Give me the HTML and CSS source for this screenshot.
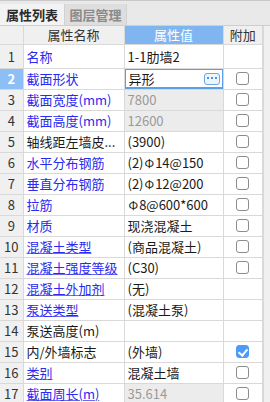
FILE: index.html
```html
<!DOCTYPE html>
<html lang="zh-CN">
  <head>
    <meta charset="UTF-8" />
    <meta name="viewport" content="width=device-width, initial-scale=1.0" />
    <title>属性列表</title>
    <link rel="stylesheet" href="styles.css">
  </head>
  <body>
    <div class="panel">
      <div class="tabs">
        <div class="tab tab-active">属性列表</div>
        <div class="tab">图层管理</div>
      </div>
      <div class="grid-wrap">
        <table class="props">
          <thead>
            <tr>
              <th class="col-num"></th>
              <th class="col-name">属性名称</th>
              <th class="col-value head-active">属性值</th>
              <th class="col-add">附加</th>
            </tr>
          </thead>
          <tbody>
            <tr class="row-first">
              <td class="num">1</td>
              <td class="name">名称</td>
              <td class="value">1-1肋墙2</td>
              <td class="add"></td>
            </tr>
            <tr>
              <td class="num num-active">2</td>
              <td class="name">截面形状</td>
              <td class="value value-edit">
                <div class="edit-box">
                  <span>异形</span>
                  <span class="more-btn">
                    <svg width="10" height="3" viewBox="0 0 10 3">
                      <rect x="0" y="0" width="2" height="2" fill="#4f95e3" />
                      <rect x="4" y="0" width="2" height="2" fill="#4f95e3" />
                      <rect x="8" y="0" width="2" height="2" fill="#4f95e3" />
                    </svg>
                  </span>
                </div>
              </td>
              <td class="add"><span class="check"></span></td>
            </tr>
            <tr>
              <td class="num">3</td>
              <td class="name">截面宽度(mm)</td>
              <td class="value value-ro">7800</td>
              <td class="add"><span class="check"></span></td>
            </tr>
            <tr>
              <td class="num">4</td>
              <td class="name">截面高度(mm)</td>
              <td class="value value-ro">12600</td>
              <td class="add"><span class="check"></span></td>
            </tr>
            <tr>
              <td class="num">5</td>
              <td class="name name-plain">轴线距左墙皮...</td>
              <td class="value">(3900)</td>
              <td class="add"><span class="check"></span></td>
            </tr>
            <tr>
              <td class="num">6</td>
              <td class="name">水平分布钢筋</td>
              <td class="value">(2)<span class="bar">Φ</span>14@150</td>
              <td class="add"><span class="check"></span></td>
            </tr>
            <tr>
              <td class="num">7</td>
              <td class="name">垂直分布钢筋</td>
              <td class="value">(2)<span class="bar">Φ</span>12@200</td>
              <td class="add"><span class="check"></span></td>
            </tr>
            <tr>
              <td class="num">8</td>
              <td class="name">拉筋</td>
              <td class="value"><span class="bar">Φ</span>8@600*600</td>
              <td class="add"><span class="check"></span></td>
            </tr>
            <tr>
              <td class="num">9</td>
              <td class="name">材质</td>
              <td class="value">现浇混凝土</td>
              <td class="add"><span class="check"></span></td>
            </tr>
            <tr>
              <td class="num">10</td>
              <td class="name name-link">混凝土类型</td>
              <td class="value">(商品混凝土)</td>
              <td class="add"><span class="check"></span></td>
            </tr>
            <tr>
              <td class="num">11</td>
              <td class="name name-link">混凝土强度等级</td>
              <td class="value">(C30)</td>
              <td class="add"><span class="check"></span></td>
            </tr>
            <tr>
              <td class="num">12</td>
              <td class="name name-link">混凝土外加剂</td>
              <td class="value">(无)</td>
              <td class="add"></td>
            </tr>
            <tr>
              <td class="num">13</td>
              <td class="name name-link">泵送类型</td>
              <td class="value">(混凝土泵)</td>
              <td class="add"></td>
            </tr>
            <tr>
              <td class="num">14</td>
              <td class="name name-plain">泵送高度(m)</td>
              <td class="value"></td>
              <td class="add"></td>
            </tr>
            <tr>
              <td class="num">15</td>
              <td class="name name-plain">内/外墙标志</td>
              <td class="value">(外墙)</td>
              <td class="add"><span class="check check-on"></span></td>
            </tr>
            <tr>
              <td class="num">16</td>
              <td class="name name-link">类别</td>
              <td class="value">混凝土墙</td>
              <td class="add"><span class="check"></span></td>
            </tr>
            <tr>
              <td class="num">17</td>
              <td class="name name-link">截面周长(m)</td>
              <td class="value value-ro">35.614</td>
              <td class="add"><span class="check"></span></td>
            </tr>
          </tbody>
        </table>
        <div class="scroll-track"></div>
      </div>
    </div>
  </body>
</html>
```

FILE: styles.css
```css
/* Reset */
* {
  box-sizing: border-box;
}

body {
  margin: 0;
  width: 270px;
  height: 402px;
  overflow: hidden;
  background-color: #ffffff;
  font-family: "Noto Sans CJK SC", "Liberation Sans", sans-serif;
  font-size: 13px;
  color: #1a1a1a;
}

/* Tabs */
.tabs {
  display: flex;
  height: 26px;
  padding-top: 3px;
  background-color: #e9e9e9;
  border-top: 1px solid #c9c9c9;
  border-bottom: 1px solid #cfcfcf;
}

.tab {
  width: 62px;
  padding-top: 1px;
  text-align: center;
  color: #8a8a8a;
  font-weight: bold;
  line-height: 20px;
  background-color: #dedede;
  border-right: 1px solid #d2d2d2;
}

.tab-active {
  width: 65px;
  color: #2b2b2b;
  background-color: #f3f3f3;
}

/* Grid */
.grid-wrap {
  display: flex;
}

.props {
  width: 263px;
  border-collapse: collapse;
  table-layout: fixed;
}

.props th,
.props td {
  padding: 0;
  border: 1px solid #d9d9d9;
  white-space: nowrap;
  overflow: hidden;
}

.props th {
  height: 18px;
  font-weight: normal;
  line-height: 16px;
  text-align: center;
  color: #333333;
  background-color: #f0f0f0;
  border-top: none;
}

.props td {
  height: 21px;
  line-height: 19px;
}

.props tr:first-child th:first-child,
.props td:first-child {
  border-left: none;
}

.col-num {
  width: 23px;
}

.col-name {
  width: 101px;
}

.col-value {
  width: 99px;
}

.props .head-active {
  color: #ffffff;
  background-color: #7fb6f2;
}

.row-first td {
  height: 24px;
}

.num {
  text-align: center;
  color: #333333;
  background-color: #f0f0f0;
}

.props .num-active {
  color: #ffffff;
  font-weight: bold;
  background-color: #8dbef5;
}

.name {
  padding-left: 3px !important;
  color: #2a2af0;
}

.name-plain {
  color: #1a1a1a;
}

.name-link {
  text-decoration: underline;
  text-decoration-thickness: 1px;
  text-decoration-color: #6b6bf3;
  text-underline-offset: 1px;
}

.value {
  padding-left: 3px !important;
  color: #1a1a1a;
}

.value-ro {
  color: #9a9a9a;
  background-color: #ececec;
}

.bar {
  font-size: 12px;
  margin: 0 1px;
}

.props .value-edit {
  padding: 0 !important;
}

.edit-box {
  display: flex;
  align-items: center;
  justify-content: space-between;
  height: 21px;
  padding: 0 2px 0 3px;
  border: 2px solid #5b9fe8;
  margin: -1px;
}

.more-btn {
  display: flex;
  align-items: center;
  justify-content: center;
  width: 16px;
  height: 12px;
  border: 1px solid #6aa8ec;
  border-radius: 3px;
  background-color: #eef5fd;
}

.add {
  text-align: center;
}

.check {
  display: inline-block;
  width: 13px;
  height: 13px;
  margin-top: 3px;
  vertical-align: top;
  border: 1px solid #8c8c8c;
  border-radius: 3px;
  background-color: #ffffff;
}

.check-on {
  position: relative;
  border-color: #4b9cf7;
  background-color: #4b9cf7;
}

.check-on::after {
  content: '';
  position: absolute;
  left: 3px;
  top: 1px;
  width: 4px;
  height: 7px;
  border-right: 2px solid #ffffff;
  border-bottom: 2px solid #ffffff;
  transform: rotate(40deg);
}

.scroll-track {
  width: 7px;
  background-color: #f0f0f0;
  border-left: 1px solid #d9d9d9;
}
```
